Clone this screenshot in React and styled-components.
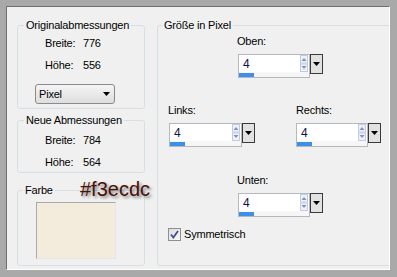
import React from "react";
import styled, { createGlobalStyle } from "styled-components";

const GlobalStyle = createGlobalStyle`
  html, body {
    margin: 0;
    padding: 0;
  }
  body {
    width: 397px;
    height: 277px;
    overflow: hidden;
    background: #a9a9a9;
    font-family: "Liberation Sans", Arial, sans-serif;
    font-size: 11px;
    letter-spacing: -0.2px;
    color: #000;
  }
`;

const Frame = styled.div`
  box-sizing: border-box;
  margin: 6px 0 0 6px;
  width: 384px;
  height: 264px;
  border-top: 1px solid #6e6e6e;
  border-left: 1px solid #6e6e6e;
  border-right: 1px solid #ffffff;
  border-bottom: 1px solid #ffffff;
  background: #f0f0f0;
  display: flex;
  gap: 12px;
  padding: 11px 0 0 10px;
  overflow: hidden;
`;

const Column = styled.div`
  width: 128px;
  flex-shrink: 0;
  display: flex;
  flex-direction: column;
`;

const Group = styled.fieldset`
  box-sizing: border-box;
  position: relative;
  margin: ${({ $top }) => $top || 0}px 0 0 0;
  padding: 0;
  min-width: 0;
  width: ${({ $w }) => $w}px;
  height: ${({ $h }) => $h}px;
  flex-shrink: 0;
  border: 1px solid #d5dfe5;
  border-radius: 3px;
`;

const Legend = styled.legend`
  margin-left: ${({ $indent }) => $indent}px;
  padding: 0 2px;
  line-height: 14px;
`;

const Body = styled.div`
  padding: ${({ $pad }) => $pad || "0"};
  display: flex;
  flex-direction: column;
  align-items: flex-start;
`;

const InfoGrid = styled.div`
  display: grid;
  grid-template-columns: 38px auto;
  grid-auto-rows: 22px;
  align-items: center;
  margin-left: 10px;
`;

const Select = styled.div`
  box-sizing: border-box;
  margin-top: 8px;
  width: 80px;
  height: 20px;
  border: 1px solid #8a8a8a;
  border-radius: 3px;
  background: linear-gradient(#f4f4f4, #dedede);
  display: flex;
  align-items: center;
  justify-content: space-between;
  padding: 0 4px 0 3px;
`;

const Swatch = styled.div`
  box-sizing: border-box;
  margin: 5px 0 0 18px;
  width: 80px;
  height: 57px;
  background: #f3ecdc;
  border-top: 1px solid #a9a9a9;
  border-left: 1px solid #a9a9a9;
  border-right: 1px solid #e6e6e6;
  border-bottom: 1px solid #e6e6e6;
`;

const HexLabel = styled.div`
  position: absolute;
  left: 62px;
  top: -18px;
  font-size: 20px;
  line-height: 20px;
  letter-spacing: 0;
  color: #4a1006;
  text-shadow: 2px 2px 3px rgba(0, 0, 0, 0.45);
`;

const Row = styled.div`
  display: flex;
  margin-top: ${({ $top }) => $top || 0}px;
  margin-left: ${({ $left }) => $left || 0}px;
  gap: 41px;
`;

const Cell = styled.div`
  display: flex;
  flex-direction: column;
  gap: 6px;
`;

const Label = styled.div`
  line-height: 14px;
  margin-left: ${({ $shift }) => $shift || 0}px;
`;

const SpinBox = styled.div`
  display: flex;
  align-items: flex-start;
`;

const FieldCol = styled.div`
  box-sizing: border-box;
  width: ${({ $w }) => $w}px;
  height: 24px;
  border: 1px solid #b5b9bf;
  display: flex;
  flex-direction: column;
  background: #f6f6f6;
`;

const FieldTop = styled.div`
  height: 18px;
  display: flex;
  align-items: center;
  background: #fff;
`;

const Value = styled.span`
  flex: 1;
  padding-left: 4px;
  font-size: 12px;
  color: #10104a;
`;

const Bar = styled.div`
  height: 4px;
  width: 15px;
  margin-top: 1px;
  background: #3f8fe8;
`;

const DropBtn = styled.div`
  box-sizing: border-box;
  width: 13px;
  height: 20px;
  border: 1px solid #3a3a3a;
  background: #e2e2e2;
  display: flex;
  align-items: center;
  justify-content: center;
`;

const CheckRow = styled.label`
  display: flex;
  align-items: center;
  gap: 3px;
  margin-top: 10px;
  line-height: 14px;
`;

const Box = styled.span`
  box-sizing: border-box;
  width: 13px;
  height: 13px;
  border: 1px solid #8e8f8f;
  background: linear-gradient(135deg, #dcdcdc, #fafafa);
  display: flex;
  align-items: center;
  justify-content: center;
`;

const DownArrow = ({ w = 7 }) => (
  <svg width={w} height="4" viewBox="0 0 7 4">
    <path d="M0 0 H7 L3.5 4 Z" fill="#000" />
  </svg>
);

const Spinner = () => (
  <svg width="8" height="17" viewBox="0 0 8 17" style={{ marginRight: 1 }}>
    <rect x="0.5" y="0.5" width="7" height="7.5" fill="#eef1f7" stroke="#c3cbdc" />
    <rect x="0.5" y="9" width="7" height="7.5" fill="#eef1f7" stroke="#c3cbdc" />
    <path d="M1.5 6 L4 3 L6.5 6 Z" fill="#7d93c8" />
    <path d="M1.5 11 L4 14 L6.5 11 Z" fill="#7d93c8" />
  </svg>
);

const Spin = ({ label, w = 72, shift = 0 }) => (
  <Cell>
    <Label $shift={shift}>{label}</Label>
    <SpinBox>
      <FieldCol $w={w}>
        <FieldTop>
          <Value>4</Value>
          <Spinner />
        </FieldTop>
        <Bar />
      </FieldCol>
      <DropBtn>
        <DownArrow />
      </DropBtn>
    </SpinBox>
  </Cell>
);

export default function App() {
  return (
    <>
      <GlobalStyle />
      <Frame>
        <Column>
          <Group $w={128} $h={91}>
            <Legend $indent={6}>Originalabmessungen</Legend>
            <Body $pad="0 0 0 17px">
              <InfoGrid>
                <span>Breite:</span>
                <span>776</span>
                <span>Höhe:</span>
                <span>556</span>
              </InfoGrid>
              <Select>
                <span>Pixel</span>
                <DownArrow />
              </Select>
            </Body>
          </Group>
          <Group $w={128} $h={60} $top={4}>
            <Legend $indent={6}>Neue Abmessungen</Legend>
            <Body $pad="2px 0 0 17px">
              <InfoGrid>
                <span>Breite:</span>
                <span>784</span>
                <span>Höhe:</span>
                <span>564</span>
              </InfoGrid>
            </Body>
          </Group>
          <Group $w={128} $h={83} $top={10}>
            <Legend $indent={5}>Farbe</Legend>
            <Swatch />
            <HexLabel>#f3ecdc</HexLabel>
          </Group>
        </Column>
        <Group $w={242} $h={248}>
          <Legend $indent={4}>Größe in Pixel</Legend>
          <Body $pad="2px 0 0 10px">
            <Row $left={70}>
              <Spin label="Oben:" shift={-1} />
            </Row>
            <Row $top={25} $left={1}>
              <Spin label="Links:" w={73} shift={-1} />
              <Spin label="Rechts:" />
            </Row>
            <Row $top={26} $left={70}>
              <Spin label="Unten:" shift={-1} />
            </Row>
            <CheckRow>
              <Box>
                <svg width="11" height="11" viewBox="0 0 11 11">
                  <path d="M2 5.5 L4.3 8.5 L9 2" fill="none" stroke="#3b4f95" strokeWidth="1.8" />
                </svg>
              </Box>
              <span>Symmetrisch</span>
            </CheckRow>
          </Body>
        </Group>
      </Frame>
    </>
  );
}
